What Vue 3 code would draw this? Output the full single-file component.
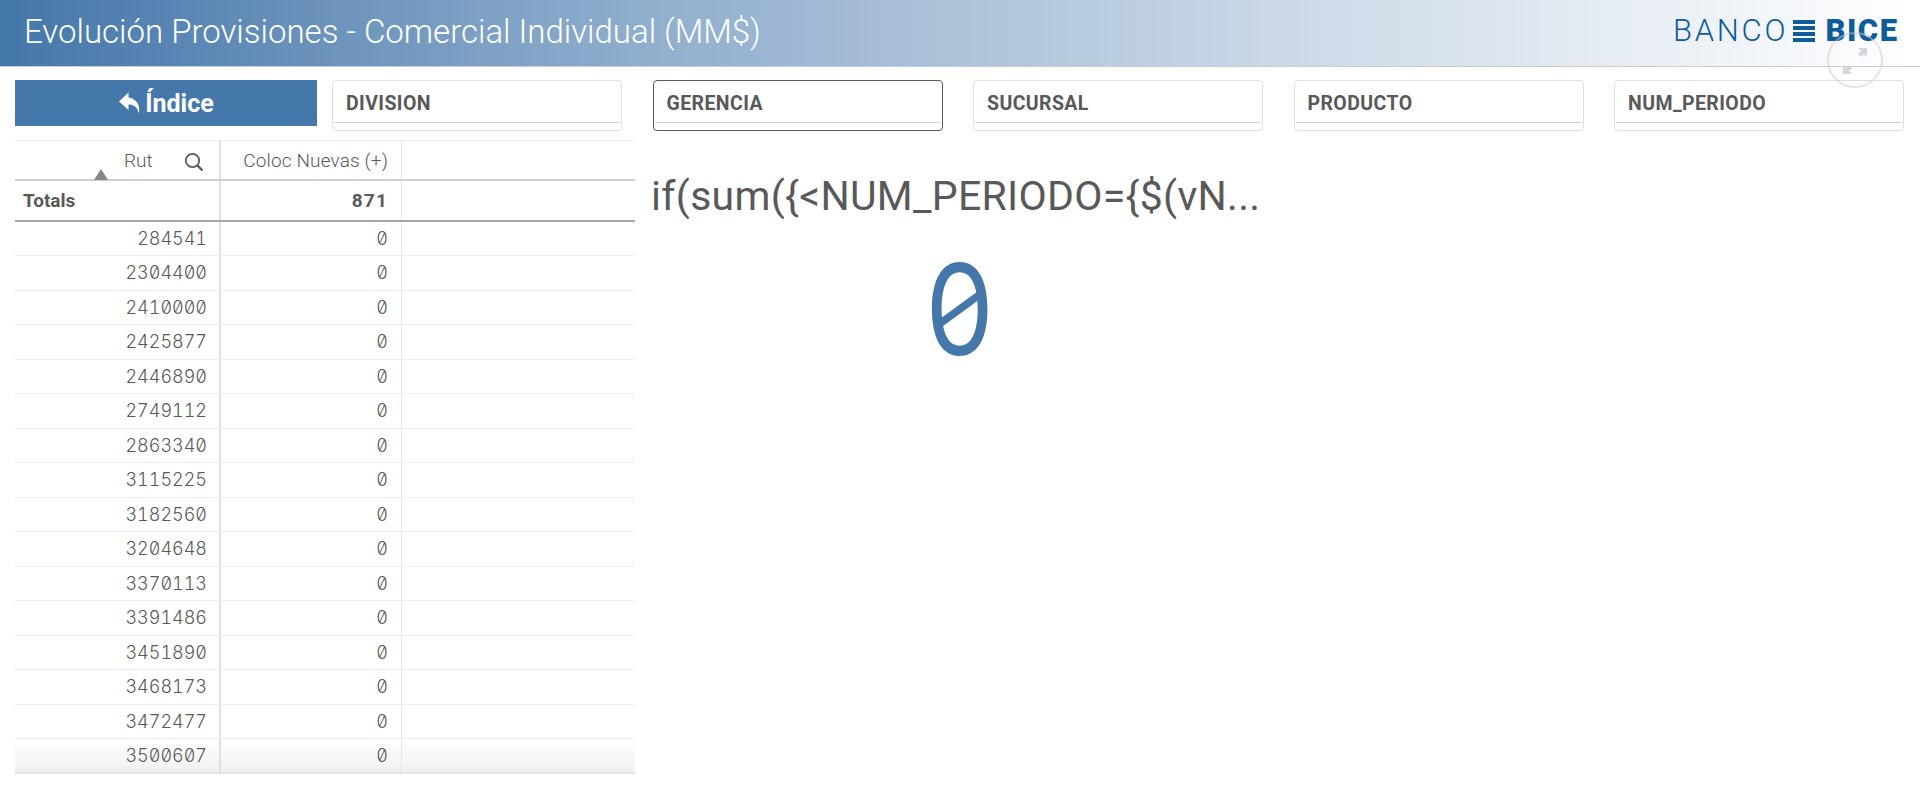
<template>
  <div class="page">
    <header class="topbar">
      <h1 class="title">Evolución Provisiones - Comercial Individual (MM$)</h1>
      <div class="logo">
        <span class="logo-thin">BANCO</span>
        <span class="logo-bars"><i></i><i></i><i></i><i></i></span>
        <span class="logo-bold">BICE</span>
      </div>
      <div class="expand">
        <svg width="52" height="52" viewBox="0 0 52 52">
          <path d="M29 14h9v9l-3-3-3 3-3-3 3-3zM23 40h-9v-9l3 3 3-3 3 3-3 3z" fill="#d4d6da" />
        </svg>
      </div>
    </header>

    <main class="content">
      <div class="top-row">
        <button class="index-btn">
          <svg width="24" height="24" viewBox="0 0 24 24">
            <path d="M10.500 1.500 1 10.500l9.500 8.500v-5.500c5.500 0 8.500 2.500 10.500 9 1.500-9-3-15-10.500-16z" fill="#fff" />
          </svg>
          Índice
        </button>
        <div v-for="f in filters" :key="f" class="filter" :class="{ active: f === 'GERENCIA' }">
          <span class="filter-name">{{ f }}</span>
        </div>
      </div>

      <div class="bottom-row">
        <div class="table">
          <div class="row head">
            <div class="cell rut-head">
              <span class="sort"></span>
              <span class="rut-label">Rut</span>
              <svg class="search" width="20" height="20" viewBox="0 0 20 20">
                <circle cx="8.500" cy="8.500" r="6.700" fill="none" stroke="#595959" stroke-width="1.800" />
                <path d="m13 13 5.500 5.500" stroke="#595959" stroke-width="2.400" />
              </svg>
            </div>
            <div class="cell num-head">Coloc Nuevas (+)</div>
            <div class="cell"></div>
          </div>
          <div class="row totals">
            <div class="cell totals-label">Totals</div>
            <div class="cell right total-num">871</div>
            <div class="cell"></div>
          </div>
          <div v-for="(r, i) in ruts" :key="r" class="row data" :class="{ last: i === ruts.length - 1 }">
            <div class="cell right">{{ r }}</div>
            <div class="cell right">0</div>
            <div class="cell"></div>
          </div>
        </div>

        <section class="kpi">
          <div class="kpi-title">if(sum({&lt;NUM_PERIODO={$(vN...</div>
          <div class="kpi-value"><span>0</span></div>
        </section>
      </div>
    </main>
  </div>
</template>

<script setup>
const filters = ['DIVISION', 'GERENCIA', 'SUCURSAL', 'PRODUCTO', 'NUM_PERIODO']
const ruts = [
  284541, 2304400, 2410000, 2425877, 2446890, 2749112, 2863340, 3115225,
  3182560, 3204648, 3370113, 3391486, 3451890, 3468173, 3472477, 3500607
]
</script>

<style>
html, body { margin: 0; background: #fff; overflow: hidden; }
</style>

<style scoped>
.page {
  width: 1920px;
  height: 787px;
  overflow: hidden;
  font-family: "Roboto", "Liberation Sans", sans-serif;
  color: #595959;
}
.topbar {
  position: relative;
  height: 67px;
  display: flex;
  align-items: center;
  justify-content: space-between;
  padding: 0 23px 0 24px;
  box-sizing: border-box;
  background: linear-gradient(90deg, #4477aa 0%, #8fadcc 33%, #c9d7e6 66%, #ffffff 100%);
  border-bottom: 1px solid #c8ccd2;
}
.title {
  margin: 0 0 3px;
  font-size: 33px;
  font-weight: 300;
  color: #fff;
  white-space: nowrap;
}
.logo {
  display: flex;
  align-items: center;
  gap: 8px;
  margin-bottom: 4px;
  color: #0f5c9a;
}
.logo-thin { font-size: 31px; font-weight: 300; line-height: 30px; letter-spacing: 2.700px; margin-right: -2.700px; }
.logo-bold { font-size: 31px; font-weight: 900; line-height: 30px; letter-spacing: 1.500px; margin-left: 2px; margin-right: -1.500px; }
.logo-bars { display: flex; flex-direction: column; gap: 2.600px; width: 22px; }
.logo-bars i { display: block; height: 3.500px; background: #0f5c9a; }
.expand {
  position: absolute;
  left: 1827px;
  top: 32px;
  width: 52px;
  height: 52px;
  border: 2px solid rgba(200, 202, 206, 0.5);
  border-radius: 50%;
}
.content { padding: 13px 16px 0 15px; }
.top-row { display: flex; gap: 30.500px; align-items: flex-start; }
.index-btn {
  width: 302px;
  margin-right: -15.500px;
  flex-shrink: 0;
  height: 46px;
  display: flex;
  align-items: center;
  justify-content: center;
  gap: 3px;
  border: 0;
  padding: 0;
  background: #4477aa;
  color: #fff;
  font-family: inherit;
  font-size: 25px;
  font-weight: 700;
}
.filter {
  width: 290px;
  height: 51px;
  box-sizing: border-box;
  flex-shrink: 0;
  border: 1px solid #e0e0e0;
  border-radius: 4px;
  padding: 0 1px;
}
.filter.active { border-color: #595959; }
.filter-name {
  display: block;
  height: 41px;
  line-height: 45px;
  padding-left: 12px;
  border-bottom: 1px solid #d4d4d4;
  font-size: 19.500px;
  font-weight: 700;
  letter-spacing: 0.400px;
}
.bottom-row { display: flex; margin-top: 9px; }
.table { width: 620px; flex-shrink: 0; border-top: 1px solid #eee; }
.row {
  display: grid;
  grid-template-columns: 206px 181px 233px;
  box-sizing: border-box;
}
.cell {
  display: flex;
  align-items: center;
  box-sizing: border-box;
  border-right: 1px solid #e6e6e6;
  padding-right: 13px;
}
.cell:first-child { border-right: 2px solid #e0e0e0; padding-right: 12px; }
.cell:last-child { border-right: 0; }
.right { justify-content: flex-end; }
.head { height: 40px; border-bottom: 2px solid #d0d0d0; }
.rut-head { position: relative; padding: 0; }
.rut-label { position: absolute; left: 109px; top: 8px; font-size: 19px; font-weight: 300; }
.sort {
  position: absolute;
  left: 78.500px;
  bottom: -1px;
  border-left: 7.500px solid transparent;
  border-right: 7.500px solid transparent;
  border-bottom: 11px solid #858585;
}
.search { position: absolute; left: 169px; top: 11px; }
.num-head { justify-content: flex-end; font-size: 19px; font-weight: 300; letter-spacing: 0.150px; }
.totals {
  height: 40.500px;
  border-bottom: 2px solid #a6a6a6;
  font-weight: 700;
  font-size: 19px;
}
.totals-label { padding-left: 8px; }
.total-num { letter-spacing: 1.200px; }
.data {
  height: 34.500px;
  border-bottom: 1px solid #eee;
  font-family: "Inter", sans-serif;
  font-feature-settings: "zero", "tnum";
  font-size: 18px;
  font-weight: 300;
}
.data.last {
  background: linear-gradient(180deg, #fff 0%, #f0f0f0 100%);
  border-bottom: 2px solid #e6e6e6;
}
.kpi { width: 613px; margin-left: 16px; padding-top: 32px; flex-shrink: 0; }
.kpi-title {
  font-size: 41px;
  font-weight: 400;
  line-height: 48px;
  letter-spacing: 0.300px;
  white-space: nowrap;
}
.kpi-value {
  margin-top: 14px;
  line-height: 150px;
  text-align: center;
  color: #4477aa;
  font-family: "Inter", sans-serif;
  font-size: 126px;
  font-weight: 400;
}
.kpi-value span {
  position: relative;
  display: inline-block;
  margin-left: 4px;
  transform: scaleX(0.86);
}
.kpi-value span::after {
  content: "";
  position: absolute;
  left: 50%;
  top: 50%;
  width: 56px;
  height: 8px;
  margin: -4px 0 0 -28px;
  background: #4477aa;
  transform: rotate(-32deg);
}
</style>
